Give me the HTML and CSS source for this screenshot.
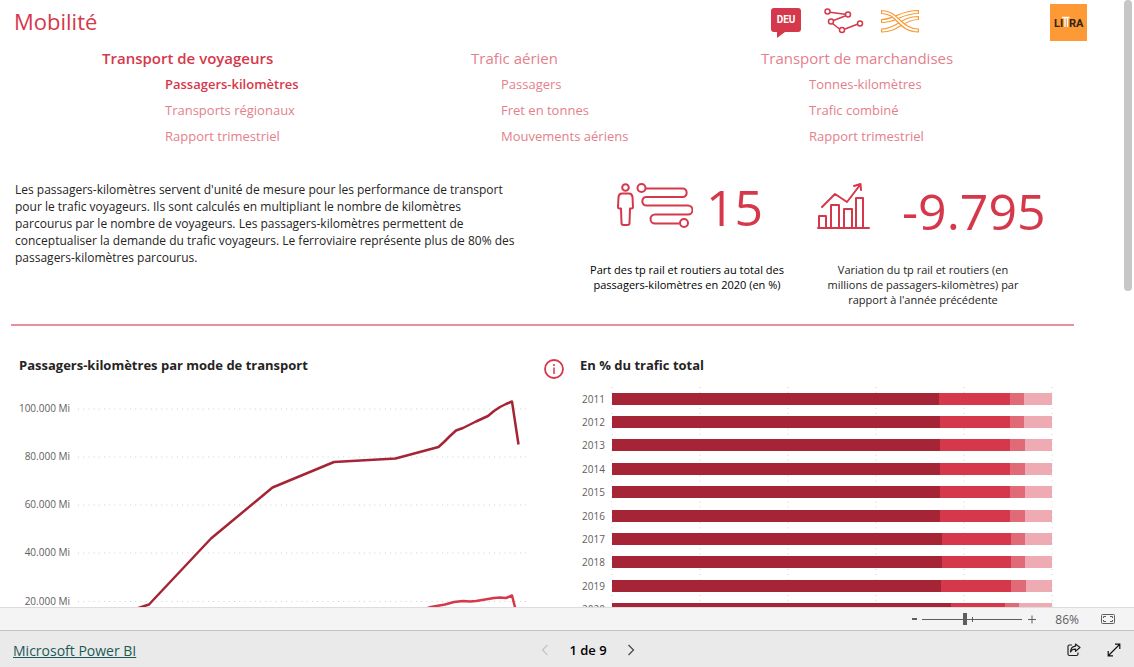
FILE: index.html
```html
<!DOCTYPE html>
<html lang="fr">
<head>
<meta charset="utf-8">
<meta name="viewport" content="width=device-width, initial-scale=1">
<title>Mobilité</title>
<link rel="stylesheet" href="styles.css">
</head>
<body>
<main class="viewport">
  <div class="report">
    <header class="header">
      <h1 class="title">Mobilité</h1>
      <div class="tools">
        <button class="lang" type="button">
          <svg class="lang-shape" viewBox="0 0 30 30" aria-hidden="true"><path d="M3 0H27Q30 0 30 3V21Q30 24 27 24H14L6 30V24H3Q0 24 0 21V3Q0 0 3 0Z" fill="#d6384b"/></svg>
          <span class="lang-text">DEU</span>
        </button>
        <a class="tool" href="#reseau" aria-label="Réseau">
          <svg width="40" height="26" viewBox="0 0 40 26" fill="none" stroke="#d6384b" stroke-width="1.5"><path d="M6 4.200L21 6.300M21 8L9.500 12.500M8.500 15.500L15.500 21M21 21L34 16"/><circle cx="3.500" cy="3.500" r="2.500"/><circle cx="24" cy="6.500" r="2.500"/><circle cx="7" cy="13.500" r="2.500"/><circle cx="18" cy="22" r="2.500"/><circle cx="36" cy="15.500" r="2.500"/></svg>
        </a>
        <a class="tool" href="#rails" aria-label="Rails">
          <svg width="38" height="26" viewBox="0 0 38 26" fill="none" stroke="#fb9a35" stroke-width="1.200" stroke-linejoin="round"><path d="M.6 21C16 21 20 8.500 37.400 8.500V11.500C22 11.500 18 24 .6 24Z" fill="#fff"/><path d="M.6 11.500C14 11.500 18 2.500 37.400 2.500V5.500C20 5.500 16 14.500 .6 14.500Z" fill="#fff"/><path d="M.6 2.500C17 2.500 20 21 37.400 21V24C17 24 17 5.500 .6 5.500Z" fill="#fff"/></svg>
        </a>
      </div>
      <a class="logo" href="#litra" aria-label="LITRA">
        <svg width="37" height="37" viewBox="0 0 37 37"><rect width="37" height="37" fill="#fd9a35"/><text class="logo-dark" x="4" y="23">LI</text><text class="logo-dark" x="19" y="23">RA</text><path d="M12 13.500H19.500M15 13V23M17.500 13V23" stroke="#fff" stroke-width="1.300" fill="none"/></svg>
      </a>
    </header>

    <nav class="nav">
      <section class="nav-group">
        <h2 class="nav-title nav-title-on">Transport de voyageurs</h2>
        <ul class="nav-list nav-list-wide">
          <li><a class="nav-link nav-link-on" href="#pkm">Passagers-kilomètres</a></li>
          <li><a class="nav-link" href="#regionaux">Transports régionaux</a></li>
          <li><a class="nav-link" href="#trimestriel">Rapport trimestriel</a></li>
        </ul>
      </section>
      <section class="nav-group">
        <h2 class="nav-title">Trafic aérien</h2>
        <ul class="nav-list">
          <li><a class="nav-link" href="#passagers">Passagers</a></li>
          <li><a class="nav-link" href="#fret">Fret en tonnes</a></li>
          <li><a class="nav-link" href="#mouvements">Mouvements aériens</a></li>
        </ul>
      </section>
      <section class="nav-group">
        <h2 class="nav-title">Transport de marchandises</h2>
        <ul class="nav-list nav-list-mid">
          <li><a class="nav-link" href="#tkm">Tonnes-kilomètres</a></li>
          <li><a class="nav-link" href="#combine">Trafic combiné</a></li>
          <li><a class="nav-link" href="#rapport">Rapport trimestriel</a></li>
        </ul>
      </section>
    </nav>

    <section class="summary">
      <p class="intro">Les passagers-kilomètres servent d'unité de mesure pour les performance de transport<br>pour le trafic voyageurs. Ils sont calculés en multipliant le nombre de kilomètres<br>parcourus par le nombre de voyageurs. Les passagers-kilomètres permettent de<br>conceptualiser la demande du trafic voyageurs. Le ferroviaire représente plus de 80% des<br>passagers-kilomètres parcourus.</p>
      <div class="kpi">
        <div class="kpi-top">
          <svg class="kpi-icon" width="78" height="48" viewBox="0 0 78 48" fill="none" stroke="#d6384b" stroke-width="2" stroke-linejoin="round"><circle cx="10.500" cy="5.500" r="3.300"/><path d="M7 11.500H14Q17 11.500 17.500 15L18 25Q18 27 15 26.500L14.500 41Q14.500 43 12.500 43H8.500Q6.500 43 6.500 41L6 26.500Q3 27 3 25L3.500 15Q4 11.500 7 11.500Z"/><circle cx="26.500" cy="6" r="4"/><path d="M31 6.500H68A4.300 4.300 0 0 1 68 15H31A4.300 4.300 0 0 0 31 23.500H73A4.300 4.300 0 0 1 73 32.500H40A4.300 4.300 0 0 0 40 41.500H64"/><circle cx="69" cy="41" r="4"/></svg>
          <strong class="kpi-value">15</strong>
        </div>
        <p class="kpi-label kpi-label-strong">Part des tp rail et routiers au total des<br>passagers-kilomètres en 2020 (en %)</p>
      </div>
      <div class="kpi kpi-last">
        <div class="kpi-top">
          <svg class="kpi-icon" width="54" height="48" viewBox="0 0 54 48" fill="none" stroke="#d6384b" stroke-width="2" stroke-linejoin="round" stroke-linecap="round"><path d="M1 46H52M2 46V34H9V46M14 46V23H22V46M27 46V27H35V46M39 46V16H46V46M5 25L18 12L30 20L43 3M37 4L43.500 2L44 8"/></svg>
          <strong class="kpi-value kpi-value-low">-9.795</strong>
        </div>
        <p class="kpi-label">Variation du tp rail et routiers (en<br>millions de passagers-kilomètres) par<br>rapport à l'année précédente</p>
      </div>
    </section>

    <hr class="rule">

    <section class="charts">
      <figure class="chart">
        <figcaption class="chart-title">Passagers-kilomètres par mode de transport</figcaption>
        <svg class="line-chart" viewBox="0 0 520 260">
          <g class="grid-h"><path d="M71 29H520M71 77H520M71 125H520M71 173H520M71 221.500H520"/></g>
          <g class="axis-text" text-anchor="end"><text x="63" y="32">100.000 Mi</text><text x="63" y="80">80.000 Mi</text><text x="63" y="128">60.000 Mi</text><text x="63" y="176">40.000 Mi</text><text x="63" y="225">20.000 Mi</text></g>
          <path d="M101 238L142 224.500L204 158.500L265.500 107.500L327 82L388.500 78.500L431.500 67L437 62L443 56L449 50.500L456 48L469 41.500L481 36L487 31L493 27L499 24L505 21.500L511.500 64.500" fill="none" stroke="#a52536" stroke-width="2.500" stroke-linejoin="round"/>
          <path d="M401 234L424 227L438 224.500L447 222L456 221L463 221.500L469 221L475 220L487 218L493 217.600L499 218L505 215.500L510 235" fill="none" stroke="#d6384b" stroke-width="2.500" stroke-linejoin="round"/>
        </svg>
      </figure>
      <button class="info" type="button" aria-label="Informations"><svg width="20" height="20" viewBox="0 0 20 20" fill="none" stroke="#d6384b"><circle cx="10" cy="10" r="9" stroke-width="1.800"/><path d="M10 8.500V15M10 5V7" stroke-width="1.500"/></svg></button>
      <figure class="chart">
        <figcaption class="chart-title">En % du trafic total</figcaption>
        <div class="bar-chart">
          <div class="years"><span>2011</span><span>2012</span><span>2013</span><span>2014</span><span>2015</span><span>2016</span><span>2017</span><span>2018</span><span>2019</span><span>2020</span></div>
          <div class="plot">
            <svg class="plot-grid" aria-hidden="true"><line x1="0" x2="0" y1="0" y2="100%"/><line x1="20%" x2="20%" y1="0" y2="100%"/><line x1="40%" x2="40%" y1="0" y2="100%"/><line x1="60%" x2="60%" y1="0" y2="100%"/><line x1="80%" x2="80%" y1="0" y2="100%"/><line x1="100%" x2="100%" y1="0" y2="100%"/></svg>
            <div class="bar"><i class="a" style="width:74.4%"></i><i class="b" style="width:16.1%"></i><i class="c" style="width:3.2%"></i><i class="d"></i></div>
            <div class="bar"><i class="a" style="width:74.6%"></i><i class="b" style="width:15.8%"></i><i class="c" style="width:3.3%"></i><i class="d"></i></div>
            <div class="bar"><i class="a" style="width:74.6%"></i><i class="b" style="width:15.9%"></i><i class="c" style="width:3.3%"></i><i class="d"></i></div>
            <div class="bar"><i class="a" style="width:74.6%"></i><i class="b" style="width:15.9%"></i><i class="c" style="width:3.4%"></i><i class="d"></i></div>
            <div class="bar"><i class="a" style="width:74.5%"></i><i class="b" style="width:16.0%"></i><i class="c" style="width:3.4%"></i><i class="d"></i></div>
            <div class="bar"><i class="a" style="width:74.6%"></i><i class="b" style="width:15.9%"></i><i class="c" style="width:3.4%"></i><i class="d"></i></div>
            <div class="bar"><i class="a" style="width:74.9%"></i><i class="b" style="width:15.7%"></i><i class="c" style="width:3.3%"></i><i class="d"></i></div>
            <div class="bar"><i class="a" style="width:75.1%"></i><i class="b" style="width:15.6%"></i><i class="c" style="width:3.2%"></i><i class="d"></i></div>
            <div class="bar"><i class="a" style="width:74.7%"></i><i class="b" style="width:15.9%"></i><i class="c" style="width:3.5%"></i><i class="d"></i></div>
            <div class="bar"><i class="a" style="width:77.0%"></i><i class="b" style="width:12.3%"></i><i class="c" style="width:3.2%"></i><i class="d"></i></div>
          </div>
        </div>
      </figure>
    </section>
  </div>
  <div class="scroll-thumb"></div>
</main>

<div class="zoom-bar">
  <button class="plain" type="button" aria-label="Zoom arrière"><svg width="6" height="12"><path d="M0 6H5" stroke="#605e5c" stroke-width="2"/></svg></button>
  <input class="zoom-range" type="range" min="0" max="100" value="42" aria-label="Zoom">
  <button class="plain" type="button" aria-label="Zoom avant"><svg width="8" height="12"><path d="M0 6.500H8M4 2.500V10.500" stroke="#605e5c"/></svg></button>
  <span class="zoom-value">86%</span>
  <button class="plain" type="button" aria-label="Ajuster à la page"><svg width="14" height="12" viewBox="0 0 14 12" fill="none" stroke="#605e5c"><rect x=".5" y="1.500" width="13" height="9" rx="1"/><path d="M5 3.500H2.500V5M9 3.500H11.500V5M2.500 7V8.500H5M11.500 7V8.500H9"/></svg></button>
</div>

<footer class="footer">
  <div><a class="brand" href="#powerbi">Microsoft Power BI</a></div>
  <div class="pager">
    <button class="plain" type="button" aria-label="Page précédente" disabled><svg width="8" height="12" viewBox="0 0 8 12" fill="none" stroke="#c4c4c4" stroke-width="1.200"><path d="M6.500 1L1.500 6L6.500 11"/></svg></button>
    <span>1 de 9</span>
    <button class="plain" type="button" aria-label="Page suivante"><svg width="8" height="12" viewBox="0 0 8 12" fill="none" stroke="#444" stroke-width="1.200"><path d="M1.500 1L6.500 6L1.500 11"/></svg></button>
  </div>
  <div class="actions">
    <button class="plain" type="button" aria-label="Partager"><svg width="14" height="14" viewBox="0 0 14 14" fill="none" stroke="#222" stroke-width="1.200" stroke-linejoin="round"><path d="M5 2H2.500Q1 2 1 3.500V11Q1 12.500 2.500 12.500H9.500Q11 12.500 11 11V9.500M8.500 1L13 4.500L8.500 8.300V6.200Q5 6 3.500 9Q3.800 3.500 8.500 3.200Z"/></svg></button>
    <button class="plain" type="button" aria-label="Plein écran"><svg width="14" height="14" viewBox="0 0 14 14" fill="none" stroke="#111" stroke-width="1.200"><path d="M1.500 12.500L12.500 1.500M8 1.200H12.800V6M1.200 8V12.800H6"/></svg></button>
  </div>
</footer>
</body>
</html>
```
FILE: styles.css
```css
* { box-sizing: border-box; }
body {
  margin: 0;
  height: 100vh;
  display: flex;
  flex-direction: column;
  background: #fff;
  color: #252423;
  font-family: "Open Sans", "Noto Sans", sans-serif;
}
h1, h2, p, ul, figure { margin: 0; padding: 0; }
button { font: inherit; color: inherit; border: 0; padding: 0; background: none; }
svg { display: block; }
.viewport { flex: 1; min-height: 0; overflow: hidden; position: relative; }
.report { padding: 0 60px 0 11px; }
.scroll-thumb {
  position: absolute;
  top: 0;
  right: 2px;
  width: 8px;
  height: 48%;
  border-radius: 4px;
  background: #c7c7c7;
}

.header {
  display: grid;
  grid-template-columns: minmax(0, 760fr) minmax(0, 279fr) minmax(0, 24fr);
  height: 45px;
}
.title { padding-left: 3px; font-size: 22px; line-height: 42px; font-weight: 400; color: #d6384b; }
.tools { display: flex; gap: 20px; padding-top: 8px; }
.lang { position: relative; width: 30px; height: 30px; margin-right: 3px; }
.lang-shape { width: 30px; height: 30px; }
.lang-text { position: absolute; top: 0; left: 0; right: 0; font: 700 10px/23px Roboto, sans-serif; color: #fff; }
.tools .tool + .tool { margin-left: -3px; }
.logo { padding-top: 4px; }
.logo-dark { font: 700 11px Roboto, sans-serif; fill: #2e2518; }

.nav {
  display: grid;
  grid-template-columns: 369fr 290fr 313fr;
  padding-left: 91px;
  height: 104px;
}
.nav-title { font-size: 15px; line-height: 26px; font-weight: 400; color: #e4808c; }
.nav-title-on { font-weight: 600; color: #d6384b; }
.nav-list { list-style: none; padding-left: 30px; line-height: 26px; font-size: 13px; }
.nav-list-mid { padding-left: 48px; }
.nav-list-wide { padding-left: 63px; }
.nav-link { display: block; color: #e4808c; text-decoration: none; }
.nav-link-on { font-weight: 600; color: #d6384b; }

.summary {
  display: grid;
  grid-template-columns: 560fr 236fr 267fr;
  padding-top: 32px;
  height: 175px;
}
.intro { padding-left: 4px; font-size: 12px; line-height: 17px; white-space: nowrap; }
.kpi-top { display: flex; gap: 13px; height: 81px; padding-left: 44px; }
.kpi-last .kpi-top { padding-left: 10px; gap: 31px; }
.kpi-icon { flex: none; margin-top: 1px; }
.kpi-value { font-size: 50px; line-height: 52px; font-weight: 400; color: #d6384b; }
.kpi-value-low { line-height: 60px; }
.kpi-label { width: 232px; text-align: center; font-size: 11px; line-height: 15px; white-space: nowrap; }
.kpi-label-strong { color: #000; }
.rule { margin: 0; border: 0; height: 2px; background: #e8909b; }

.charts {
  display: grid;
  grid-template-columns: 533fr 36fr 494fr;
  padding-top: 28px;
}
.chart-title { padding-left: 8px; font-size: 13px; line-height: 22px; font-weight: 700; }
.chart:last-child .chart-title { padding-left: 0; }
.line-chart { width: 520px; max-width: 98%; height: auto; margin-top: 4px; margin-left: -4px; }
.grid-h path { stroke: #d2d0ce; stroke-dasharray: 1 4.2; }
.axis-text text { font-size: 10px; fill: #605e5c; }
.info { align-self: start; margin-top: 5px; }
.bar-chart { display: grid; grid-template-columns: 32px 1fr; margin-top: 11px; padding-right: 22px; }
.years, .plot { display: grid; height: 234px; grid-auto-rows: 1fr; align-items: center; }
.years { padding-left: 2px; font-size: 10px; color: #605e5c; }
.plot { position: relative; }
.plot-grid { position: absolute; width: 100%; height: 100%; overflow: visible; }
.plot-grid line { stroke: #d2d0ce; stroke-dasharray: 1 4.2; }
.bar { display: flex; height: 12px; position: relative; }
.a { background: #a52536; }
.b { background: #d6384b; }
.c { background: #e06a78; }
.d { flex: 1; background: #eeabb3; }

.zoom-bar {
  flex: none;
  height: 23px;
  display: flex;
  align-items: center;
  justify-content: flex-end;
  padding-right: 19px;
  background: #f4f4f4;
  border-top: 1px solid #dcdcdc;
}
.zoom-range {
  appearance: none;
  width: 100px;
  height: 12px;
  margin: 0 6px 0 4px;
  background:
    linear-gradient(#605e5c, #605e5c) 50px 4px / 1px 5px no-repeat,
    linear-gradient(#605e5c, #605e5c) 0 6px / 100% 1px no-repeat;
}
.zoom-range::-webkit-slider-thumb { appearance: none; width: 4px; height: 12px; background: #605e5c; }
.zoom-value { margin: 0 22px 0 19px; font-size: 12px; color: #605e5c; }

.footer {
  flex: none;
  height: 37px;
  display: grid;
  grid-template-columns: 1fr auto 1fr;
  align-items: center;
  padding: 2px 13px 0;
  border-top: 1px solid #c3c3c3;
  background: #eaeaea;
  color: #000;
  font-size: 13px;
}
.brand { color: #1a5a57; font-size: 14px; }
.pager { display: flex; align-items: center; gap: 20px; font-weight: 600; margin-left: 42px; }
.actions { display: flex; justify-content: flex-end; gap: 26px; }
```
